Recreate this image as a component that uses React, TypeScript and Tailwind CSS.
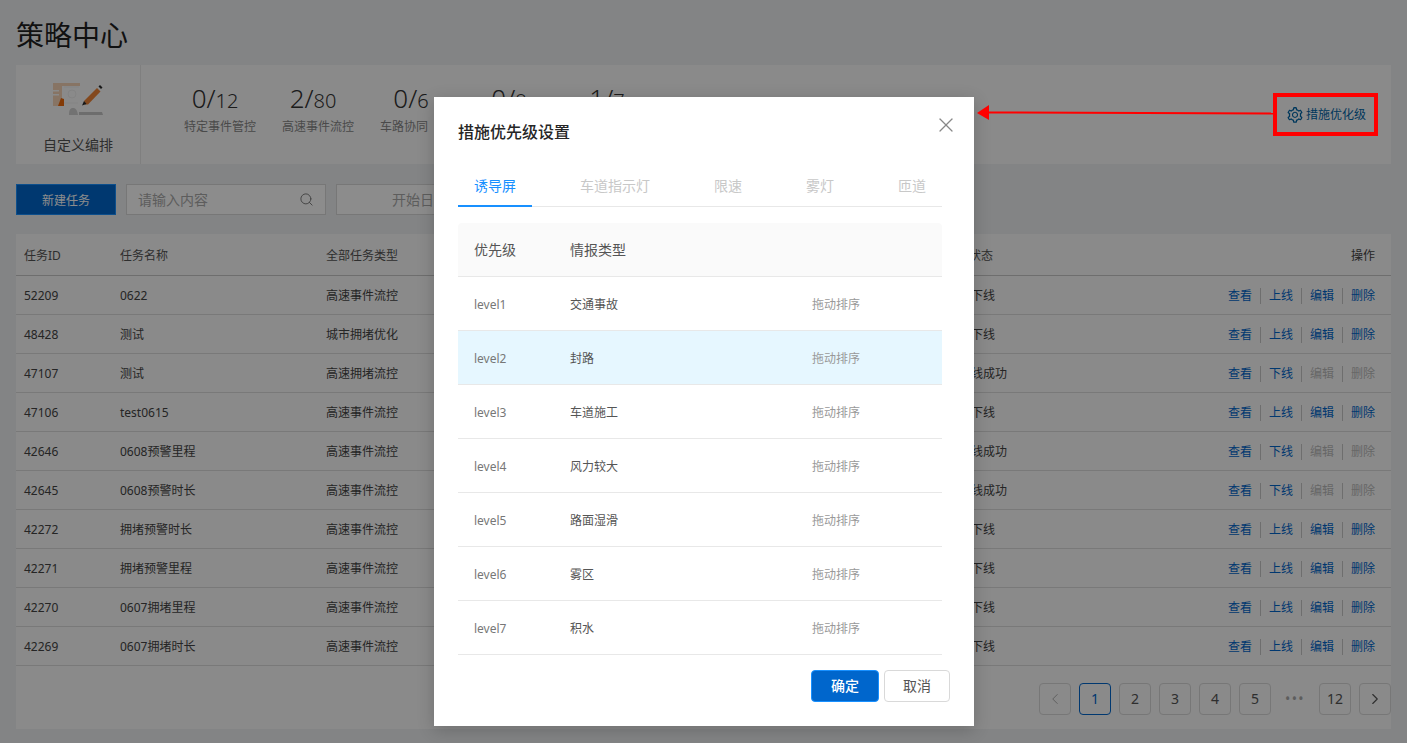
import React from 'react';
import { ChevronLeft, ChevronRight, Search, X } from 'lucide-react';
import { AiOutlineSetting } from 'react-icons/ai';

const FONT = 'font-["Noto_Sans","Noto_Sans_CJK_SC",sans-serif]';

const stats = [
  { done: '0', total: '12', label: '特定事件管控' },
  { done: '2', total: '80', label: '高速事件流控' },
  { done: '0', total: '6', label: '车路协同' },
  { done: '0', total: '8', label: '' },
  { done: '1', total: '7', label: '' },
];

const tasks = [
  { id: '52209', name: '0622', type: '高速事件流控', status: '已下线', online: false },
  { id: '48428', name: '测试', type: '城市拥堵优化', status: '已下线', online: false },
  { id: '47107', name: '测试', type: '高速拥堵流控', status: '上线成功', online: true },
  { id: '47106', name: 'test0615', type: '高速事件流控', status: '已下线', online: false },
  { id: '42646', name: '0608预警里程', type: '高速事件流控', status: '上线成功', online: true },
  { id: '42645', name: '0608预警时长', type: '高速事件流控', status: '上线成功', online: true },
  { id: '42272', name: '拥堵预警时长', type: '高速事件流控', status: '已下线', online: false },
  { id: '42271', name: '拥堵预警里程', type: '高速事件流控', status: '已下线', online: false },
  { id: '42270', name: '0607拥堵里程', type: '高速事件流控', status: '已下线', online: false },
  { id: '42269', name: '0607拥堵时长', type: '高速事件流控', status: '已下线', online: false },
];

const levels = [
  { level: 'level1', type: '交通事故' },
  { level: 'level2', type: '封路', active: true },
  { level: 'level3', type: '车道施工' },
  { level: 'level4', type: '风力较大' },
  { level: 'level5', type: '路面湿滑' },
  { level: 'level6', type: '雾区' },
  { level: 'level7', type: '积水' },
];

const EditIcon = () => (
  <svg width="52" height="33" viewBox="0 0 52 33" fill="none">
    <path d="M1 0h27v3H10v20H1z" fill="#f6d3b6" />
    <path d="M1 7h6v1.5H1zM1 11h6v1.5H1z" fill="#fbfbfb" />
    <path d="M6 23l3-8 3 1v7z" fill="#ee6a0c" />
    <circle cx="20" cy="11" r="4" stroke="#efefef" />
    <path d="M12 4h15M12 20h14" stroke="#f1f1f1" />
    <path d="M32 18L45 5l3.5 3.5L36 21.5l-3 0z" fill="#ee8436" />
    <path d="M46.5 3.5L48 2l2.5 2.5L49 6z" fill="#2b2b2b" />
    <path d="M32 18l-2 4.5 4.5-1.5z" fill="#2b2b2b" />
    <path d="M17 32c0-5 1-7 4-7s4 2 5 7z" fill="#d0d0d0" />
    <path d="M27 29h23l1 3H27z" fill="#c6c6c6" />
  </svg>
);

const Row = ({ t }: { t: (typeof tasks)[number] }) => (
  <div className="flex h-[39px] items-center border-b border-[#dcdcdc] pr-4 pt-[2px] text-xs text-[#444]">
    <div className="w-[104px] pl-2">{t.id}</div>
    <div className="w-[206px]">{t.name}</div>
    <div className="w-[633px]">{t.type}</div>
    <div className="flex-1">{t.status}</div>
    <div className="flex items-center text-[#0066cc]">
      <span>查看</span>
      <span className="mx-2 h-4 w-px bg-[#c8c8c8]" />
      <span>{t.online ? '下线' : '上线'}</span>
      <span className="mx-2 h-4 w-px bg-[#c8c8c8]" />
      <span className={t.online ? 'text-[#bbb]' : ''}>编辑</span>
      <span className="mx-2 h-4 w-px bg-[#c8c8c8]" />
      <span className={t.online ? 'text-[#bbb]' : ''}>删除</span>
    </div>
  </div>
);

const PageBtn = ({ children, active }: { children: React.ReactNode; active?: boolean }) => (
  <button
    className={`flex h-8 w-8 items-center justify-center rounded border text-sm ${
      active ? 'border-[#0066cc] text-[#0066cc]' : 'border-[#d9d9d9] text-[#555]'
    }`}
  >
    {children}
  </button>
);

export default function App() {
  return (
    <div className={`relative h-[743px] w-[1407px] overflow-hidden bg-[#eef0f3] ${FONT}`}>
      <div className="px-4">
        <h1 className="flex h-[65px] items-center pt-[5px] text-[28px] font-normal leading-none text-[#1f1f1f]">策略中心</h1>

        <div className="flex h-[99px] bg-[#fbfbfb]">
          <div className="flex w-[125px] flex-col items-center border-r border-[#e8e8e8] pt-[18px]">
            <EditIcon />
            <div className="mt-[19px] text-sm leading-5 text-[#555]">自定义编排</div>
          </div>
          <div className="flex flex-1 items-start gap-[26px] pl-[43px] pt-[18px]">
            {stats.map((s, i) => (
              <div key={i} className="w-[72px] shrink-0">
                <div className="flex h-[30px] items-baseline justify-center whitespace-nowrap pr-[10px] font-light text-[#333]">
                  <span className="text-[26px] leading-[30px]">{s.done}/</span>
                  <span className="text-xl leading-[30px]">{s.total}</span>
                </div>
                <div className="mt-[5px] whitespace-nowrap text-xs leading-[18px] text-[#888]">{s.label}</div>
              </div>
            ))}
          </div>
          <div className="mr-[13px] mt-[28px] flex h-[43px] w-[104px] items-center justify-center gap-[2px] text-xs text-[#0066a8]">
            <AiOutlineSetting size={18} />
            措施优化级
          </div>
        </div>

        <div className="mt-5 flex h-[31px] gap-[10px]">
          <button className="w-[100px] border border-[#1890ff] bg-[#0066cc] pt-[2px] text-xs text-white">新建任务</button>
          <div className="flex w-[200px] items-center justify-between border border-[#d9d9d9] bg-white pl-[11px] pr-[11px] text-sm text-[#aaa]">
            请输入内容
            <Search size={15} strokeWidth={1.5} className="text-[#777]" />
          </div>
          <div className="flex w-[200px] items-center border border-[#d9d9d9] bg-white pl-[55px] text-sm text-[#aaa]">开始日期</div>
        </div>

        <div className="mt-[19px] bg-[#fbfbfb]">
          <div className="flex h-[42px] items-center border-b border-[#c8c8c8] pr-4 pt-[2px] text-xs text-[#555]">
            <div className="w-[104px] pl-2">任务ID</div>
            <div className="w-[206px]">任务名称</div>
            <div className="w-[633px]">全部任务类型</div>
            <div className="flex-1 pl-[10px]">状态</div>
            <div className="text-[#444]">操作</div>
          </div>
          {tasks.map((t) => (
            <Row key={t.id} t={t} />
          ))}
          <div className="flex h-[63px] items-start justify-end gap-2 pt-[17px]">
            <PageBtn><ChevronLeft size={18} strokeWidth={1.25} className="text-[#aaa]" /></PageBtn>
            <PageBtn active>1</PageBtn>
            <PageBtn>2</PageBtn>
            <PageBtn>3</PageBtn>
            <PageBtn>4</PageBtn>
            <PageBtn>5</PageBtn>
            <span className="flex h-8 w-8 items-center justify-center text-sm tracking-widest text-[#aaa]">•••</span>
            <PageBtn>12</PageBtn>
            <PageBtn><ChevronRight size={18} strokeWidth={1.5} /></PageBtn>
          </div>
        </div>
      </div>

      <div className="absolute inset-0 bg-black/45" />

      <div className="absolute left-[434px] top-[97px] h-[629px] w-[540px] bg-white pl-6 pr-8 shadow-[0_4px_16px_rgba(0,0,0,0.2)]">
        <X size={24} strokeWidth={1.25} className="absolute right-4 top-4 text-[#888]" />
        <h2 className="pt-[25px] text-base font-medium leading-5 text-[#262626]">措施优先级设置</h2>

        <div className="mt-[25px] flex h-[40px] justify-between border-b border-[#e8e8e8] text-sm leading-[38px] text-[#c8c8c8]">
          <div className="h-[40px] border-b-2 border-[#1890ff] px-4 text-[#1890ff]">诱导屏</div>
          <div className="px-4">车道指示灯</div>
          <div className="px-4">限速</div>
          <div className="px-4">雾灯</div>
          <div className="px-4">匝道</div>
        </div>

        <div className="mt-4 flex h-[54px] items-center rounded-t border-b border-[#e8e8e8] bg-[#fafafa] text-sm text-[#555]">
          <div className="w-[112px] pl-4">优先级</div>
          <div>情报类型</div>
        </div>
        {levels.map((l) => (
          <div
            key={l.level}
            className={`flex h-[54px] items-center border-b border-[#e8e8e8] pt-[2px] text-xs text-[#777] ${l.active ? 'bg-[#e6f7ff]' : ''}`}
          >
            <div className="w-[112px] pl-4">{l.level}</div>
            <div className="w-[242px] text-[#555]">{l.type}</div>
            <div className="text-[#999]">拖动排序</div>
          </div>
        ))}

        <div className="mr-[-8px] mt-[15px] flex justify-end gap-[5px]">
          <button className="h-8 w-[68px] rounded-sm border border-[#1890ff] bg-[#0066cc] text-sm font-medium text-white">确定</button>
          <button className="h-8 w-[66px] rounded-sm border border-[#d9d9d9] bg-white text-sm text-[#555]">取消</button>
        </div>
      </div>

      {/* red annotation drawn on top of the screenshot */}
      <div className="pointer-events-none absolute left-[1273px] top-[93px] h-[43px] w-[105px] border-[4px] border-[#ff0000]" />
      <svg className="pointer-events-none absolute left-[974px] top-[104px]" width="302" height="20" viewBox="0 0 302 20">
        <path d="M14 8.5L300 9.5" stroke="#ff0000" strokeWidth="2" />
        <path d="M3 9l12-8v15z" fill="#ff0000" />
      </svg>
    </div>
  );
}
